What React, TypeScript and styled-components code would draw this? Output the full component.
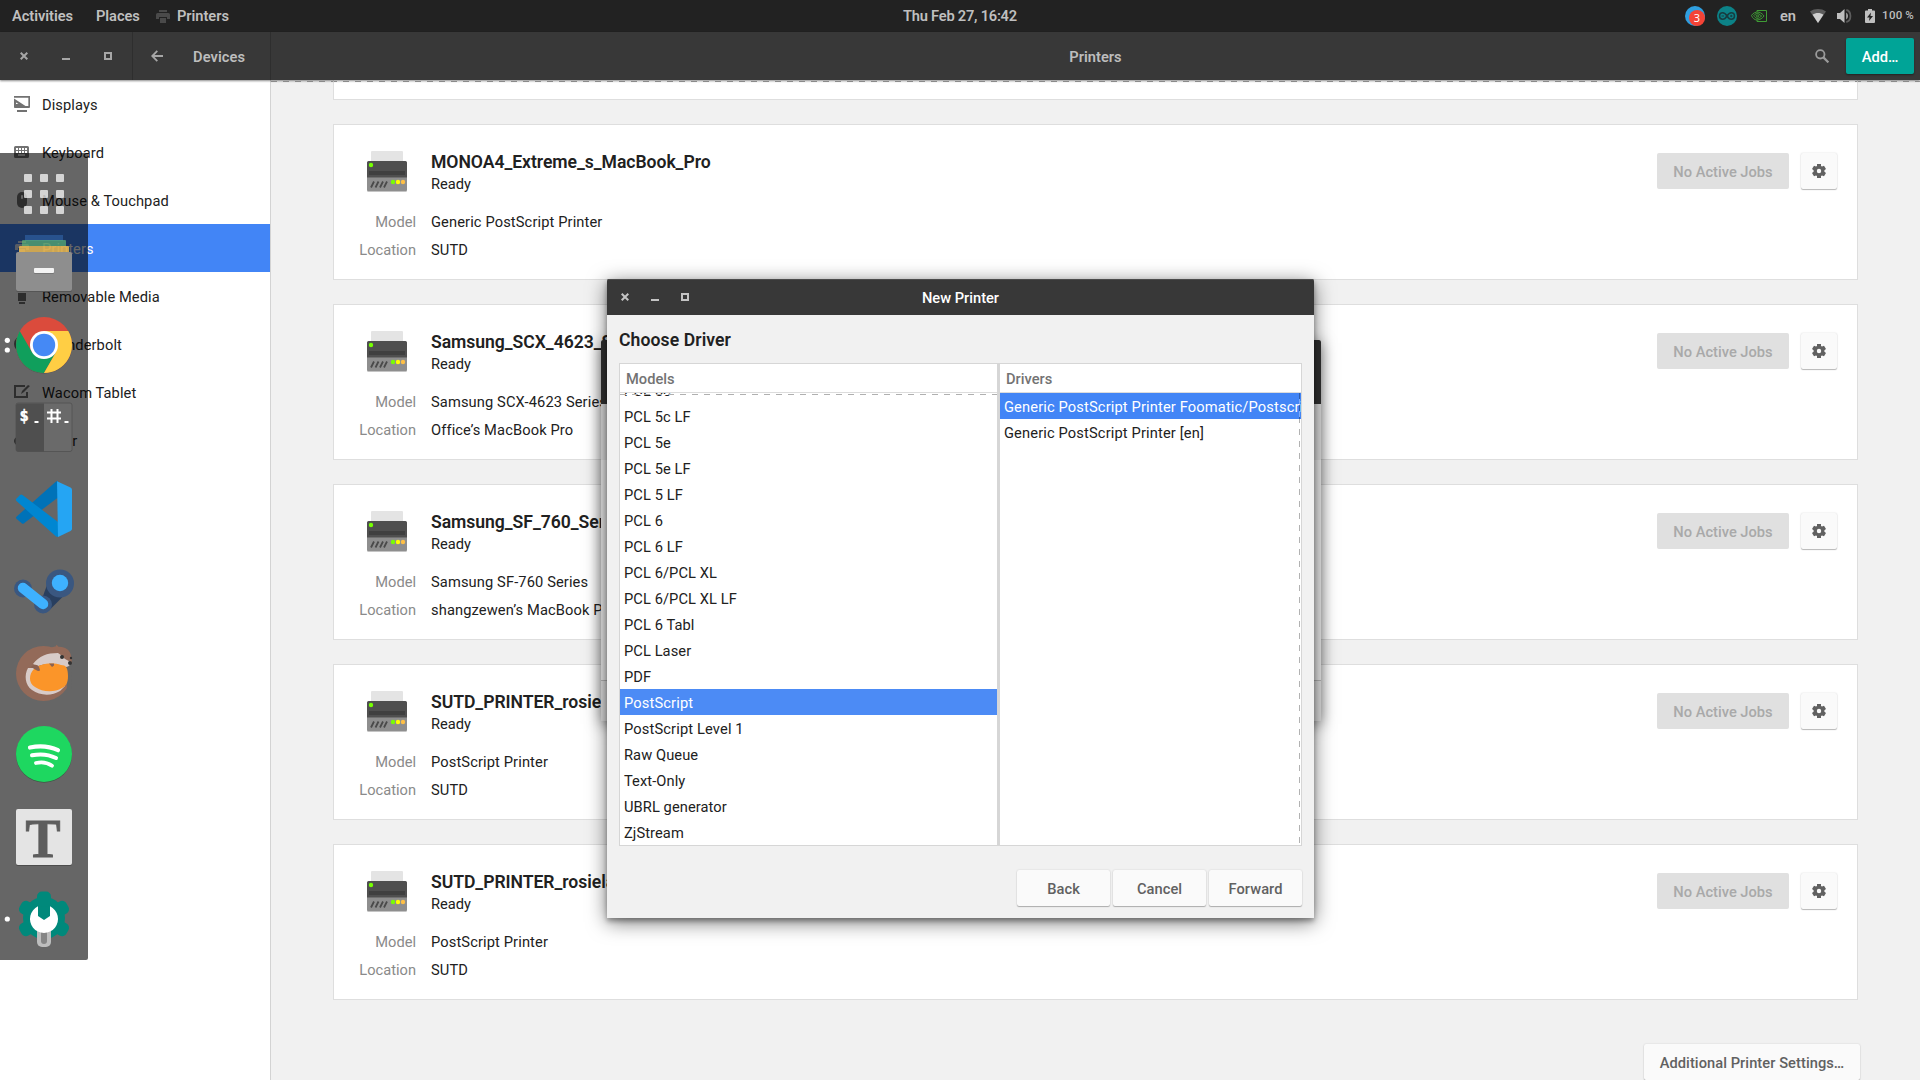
import React from 'react';
import styled, { createGlobalStyle, css } from 'styled-components';

const Global = createGlobalStyle`
  * { box-sizing: border-box; }
  html, body { margin: 0; padding: 0; }
  body {
    width: 1920px;
    height: 1080px;
    overflow: hidden;
    background: #f1f1f1;
    color: #212121;
    font-family: Roboto, "Noto Sans", sans-serif;
    font-size: 14.667px;
    line-height: 20px;
  }
  svg { display: block; flex: none; }
`;

const Desktop = styled.div`
  position: relative;
  width: 1920px;
  height: 1080px;
  overflow: hidden;
  display: flex;
  flex-direction: column;
`;

/* ---------- top panel ---------- */

const Panel = styled.header`
  height: 32px;
  flex: none;
  display: grid;
  grid-template-columns: 1fr auto 1fr;
  align-items: center;
  background: #222222;
  color: #bfbfbf;
  font-weight: 600;
`;

const PanelLeft = styled.nav`
  display: flex;
  align-items: center;
  padding-left: 12px;
`;

const PanelItem = styled.span<{ $width: number }>`
  width: ${(p) => p.$width}px;
  white-space: nowrap;
  letter-spacing: -0.05px;
`;

const Clock = styled.span`
  letter-spacing: -0.25px;
  white-space: nowrap;
`;

const PanelIcon = styled.span<{ $width: number }>`
  width: ${(p) => p.$width}px;
`;

const PanelRight = styled.div`
  display: flex;
  align-items: center;
  justify-content: flex-end;
  padding-right: 6px;
`;

const Percent = styled.span`
  width: 32px;
  font-size: 11.5px;
  font-weight: 500;
  white-space: nowrap;
  letter-spacing: 0.4px;
  word-spacing: -0.8px;
  line-height: 14px;
  margin: -2px 0 0 -1px;
`;

/* ---------- settings window ---------- */

const TitleBar = styled.div`
  height: 48px;
  flex: none;
  display: flex;
  background: #383838;
  color: #bdbdbd;
  font-weight: 600;
  position: relative;
  z-index: 1;
  box-shadow: 0 1px 2px rgba(0, 0, 0, 0.45);
`;

const TitleControls = styled.div`
  width: 133px;
  display: flex;
  align-items: center;
  padding-left: 20px;
  gap: 34px;
  border-right: 1px solid #2e2e2e;
  color: #a6a6a6;
`;

const TitleDevices = styled.div`
  width: 138px;
  display: flex;
  align-items: center;
  padding-left: 18px;
  gap: 30px;
  border-right: 1px solid #2e2e2e;
  letter-spacing: 0.08px;
`;

const TitleMain = styled.div`
  flex: 1;
  display: grid;
  grid-template-columns: 1fr auto 1fr;
  align-items: center;
`;

const TitleActions = styled.div`
  display: flex;
  justify-content: flex-end;
  align-items: center;
  gap: 17px;
  padding-right: 6px;
`;

const TitleText = styled.span`
  padding-top: 1px;
`;

const AddButton = styled.button`
  width: 68px;
  height: 36px;
  padding: 1px 0 0;
  border: 0;
  border-radius: 2px;
  background: #00a497;
  color: #fff;
  font: 500 14.667px/20px Roboto, sans-serif;
  box-shadow: 0 1px 2px rgba(0, 0, 0, 0.4);
`;

const WindowBody = styled.div`
  flex: 1;
  min-height: 0;
  display: flex;
`;

const Sidebar = styled.aside`
  width: 271px;
  flex: none;
  background: #fff;
  border-right: 1px solid #d3d3d3;
  letter-spacing: 0.09px;
`;

const SidebarRow = styled.div<{ $active?: boolean }>`
  height: 48px;
  display: flex;
  align-items: center;
  padding: 2px 0 0 14px;
  gap: 12px;
  background: ${(p) => (p.$active ? '#4285f6' : 'transparent')};
  color: ${(p) => (p.$active ? '#fff' : '#212121')};

  svg {
    margin-top: -2px;
    color: ${(p) => (p.$active ? 'rgba(255,255,255,.8)' : '#727272')};
  }
`;

const Content = styled.main`
  flex: 1;
  display: flex;
  flex-direction: column;
  align-items: flex-end;
  padding-right: 62px;
  overflow: hidden;
  background:
    repeating-linear-gradient(90deg, #a3a3a3 0 6px, transparent 6px 12px) 0 1px / 100% 1px no-repeat,
    #f1f1f1;
`;

const cardFrame = css`
  width: 1525px;
  flex: none;
  background: #fff;
  border: 1px solid #dedede;
`;

const ClippedCard = styled.section`
  ${cardFrame}
  height: 20px;
  border-top: 0;
  background:
    repeating-linear-gradient(90deg, #a3a3a3 0 6px, transparent 6px 12px) -3px 1px / 110% 1px no-repeat,
    #fff;
`;

const Card = styled.section`
  ${cardFrame}
  height: 156px;
  margin-top: 24px;
  display: flex;
  align-items: flex-start;
  justify-content: space-between;
`;

const CardInfo = styled.div`
  display: grid;
  grid-template-columns: 82px auto;
  column-gap: 15px;
  grid-template-rows: 57px 28px 28px;
  padding-top: 26px;
`;

const CardIcon = styled.div`
  display: flex;
  justify-content: flex-end;
  padding-right: 9px;
`;

const PrinterName = styled.h2`
  margin: 0;
  font-size: 17.6px;
  line-height: 22px;
  font-weight: 600;
  letter-spacing: -0.05px;
  white-space: nowrap;
`;

const Ready = styled.div`
  line-height: 22px;
`;

const Label = styled.div`
  text-align: right;
  color: #8a8a8a;
  line-height: 28px;
`;

const Value = styled.div`
  line-height: 28px;
  letter-spacing: 0.12px;
  white-space: nowrap;
`;

const CardActions = styled.div`
  display: flex;
  gap: 12px;
  padding: 28px 20px 0 0;
`;

const JobsButton = styled.button`
  width: 132px;
  height: 36px;
  padding: 2px 0 0;
  border: 0;
  border-radius: 2px;
  background: #e0e0e0;
  color: #a9a9a9;
  font: 500 14.667px/20px Roboto, sans-serif;
`;

const RaisedButton = styled.button<{ $width: number }>`
  width: ${(p) => p.$width}px;
  height: 36px;
  flex: none;
  display: flex;
  align-items: center;
  justify-content: center;
  padding: 2px 0 0;
  border: 0;
  border-radius: 2px;
  background: #fafafa;
  color: #616161;
  font: 500 14.667px/20px Roboto, sans-serif;
  letter-spacing: 0.06px;
  white-space: nowrap;
  box-shadow: 0 1px 1px rgba(0, 0, 0, 0.26), 0 0 2px rgba(0, 0, 0, 0.14);

  svg { margin-top: -2px; }
`;

const MoreSettings = styled.div`
  margin: 44px -2px 0 0;
`;

/* ---------- dialogs floating on the desktop ---------- */

const ParentShadow = styled.div`
  position: absolute;
  left: 601px;
  top: 340px;
  width: 720px;
  height: 381px;
  box-shadow: 0 3px 14px rgba(0, 0, 0, 0.5);
`;

const ParentDialog = styled.div`
  height: 381px;
  display: grid;
  grid-template-rows: 64px 56px 1fr 41px;
  border-radius: 2px 2px 0 0;
  overflow: hidden;
`;

const Band = styled.div<{ $fill: string; $line?: boolean }>`
  background: ${(p) => p.$fill};
  border-top: ${(p) => (p.$line ? '1px solid #b4b4b4' : '0')};
`;

const Dialog = styled.div`
  position: absolute;
  left: 607px;
  top: 279px;
  width: 707px;
  height: 639px;
  display: flex;
  flex-direction: column;
  background: #f1f1f1;
  border-radius: 2px 2px 0 0;
  box-shadow: 0 3px 5px rgba(0, 0, 0, 0.32), 0 4px 20px rgba(0, 0, 0, 0.55);
`;

const DialogTitle = styled.div`
  height: 36px;
  display: grid;
  grid-template-columns: 1fr auto 1fr;
  align-items: center;
  padding: 1px 14px 0;
  background: #383838;
  box-shadow: inset 0 1px 0 #4c4c4c;
  border-radius: 2px 2px 0 0;
  color: #fff;
  font-weight: 500;
`;

const DialogControls = styled.div`
  display: flex;
  align-items: center;
  gap: 22px;
  margin-top: -1px;
  color: #c4c4c4;
`;

const DialogBody = styled.div`
  flex: 1;
  display: flex;
  flex-direction: column;
  padding: 14px 12px 12px;
`;

const DialogHeading = styled.h1`
  margin: 0;
  height: 34px;
  font-size: 17.6px;
  line-height: 22px;
  font-weight: 600;
  letter-spacing: 0.08px;
`;

const Panes = styled.div`
  height: 483px;
  display: grid;
  grid-template-columns: 377px 301px;
  column-gap: 3px;
  border: 1px solid #d6d6d6;
  background: #d6d6d6;
`;

const Pane = styled.div`
  display: flex;
  flex-direction: column;
  min-width: 0;
  min-height: 0;
  background: #fff;
`;

const PaneHeader = styled.div`
  height: 29px;
  flex: none;
  padding: 1px 0 0 6px;
  line-height: 29px;
  border-bottom: 1px solid #dcdcdc;
  color: #737373;
  font-weight: 500;
`;

const PaneRows = styled.div<{ $end?: boolean }>`
  position: relative;
  flex: 1;
  min-height: 0;
  display: flex;
  flex-direction: column;
  justify-content: ${(p) => (p.$end ? 'flex-end' : 'flex-start')};
  overflow: hidden;

  &::after {
    content: '';
    position: absolute;
    ${(p) =>
      p.$end
        ? css`
            inset: 1px 0 auto 0;
            height: 1px;
            background: repeating-linear-gradient(90deg, #b0b0b0 0 6px, #fff 6px 12px);
          `
        : css`
            inset: 0 1px 0 auto;
            width: 1px;
            background: repeating-linear-gradient(180deg, rgba(0, 0, 0, 0.3) 0 6px, rgba(255, 255, 255, 0.3) 6px 12px);
          `}
  }
`;

const PaneRow = styled.div<{ $fill?: string; $spacing?: number }>`
  height: 26px;
  flex: none;
  padding: 1px 0 0 4px;
  line-height: 26px;
  letter-spacing: ${(p) => p.$spacing ?? 0.08}px;
  white-space: nowrap;
  overflow: hidden;
  background: ${(p) => p.$fill ?? 'transparent'};
  color: ${(p) => (p.$fill ? '#fff' : '#212121')};
`;

const DialogButtons = styled.div`
  margin-top: auto;
  display: flex;
  justify-content: flex-end;
  gap: 3px;
`;

/* ---------- dock ---------- */

const Dock = styled.div`
  position: absolute;
  left: 0;
  top: 153px;
  width: 88px;
  height: 807px;
  z-index: 2;
  display: flex;
  flex-direction: column;
  background: rgba(0, 0, 0, 0.6);
  border-radius: 0 0 2px 0;
`;

/* ---------- icons ---------- */

const CloseIcon = () => (
  <svg width="8" height="8" viewBox="0 0 8 8" stroke="currentColor" strokeWidth="2" fill="none">
    <path d="M.7.7l6.6 6.6M7.3.7L.7 7.3" />
  </svg>
);
const MinIcon = () => (
  <svg width="8" height="8" viewBox="0 0 8 8" fill="currentColor"><path d="M0 6h8v2H0z" /></svg>
);
const MaxIcon = () => (
  <svg width="8" height="8" viewBox="0 0 8 8" fill="none" stroke="currentColor" strokeWidth="2"><path d="M1 1h6v6H1z" /></svg>
);
const BackIcon = () => (
  <svg width="12" height="12" viewBox="0 0 12 12" fill="none" stroke="#a6a6a6" strokeWidth="1.8">
    <path d="M12 6H1.5M6.3.8L1.2 6l5.1 5.2" />
  </svg>
);
const SearchIcon = () => (
  <svg width="14" height="14" viewBox="0 0 14 14" fill="none" stroke="#9b9b9b" strokeWidth="1.8">
    <circle cx="5.3" cy="5.3" r="4.2" /><path d="M8.4 8.4l5 5" strokeWidth="2.2" />
  </svg>
);
const GearIcon = () => (
  <svg width="14" height="14" viewBox="0 0 14 14" fill="currentColor" fillRule="evenodd">
    <path d="M5 0h4v2l1 .6 2-.9 2 3.200L12.400 6.200v1.600L14 9.100l-2 3.200-2-.9-1 .6v2H5v-2l-1-.6-2 .9-2-3.200 1.600-1.300V6.200L0 4.900l2-3.200 2 .9L5 2zM7 4.800a2.200 2.200 0 100 4.400 2.200 2.200 0 000-4.400z" />
  </svg>
);
const SmallPrinter = ({ color = 'currentColor' }: { color?: string }) => (
  <svg width="14" height="13" viewBox="0 0 14 13" fill={color}>
    <path d="M3 0h8v2H3zM1.500 3h11A1.500 1.500 0 0114 4.500V9h-3V7H3v2H0V4.500A1.500 1.500 0 011.500 3zM4 8h6v5H4z" />
  </svg>
);

const DeviceIcon = ({ kind }: { kind: string }) => {
  const shapes: Record<string, React.ReactNode> = {
    displays: (
      <>
        <path d="M.8 2V1H15.200v10.200H.8V9.500" fill="none" stroke="currentColor" strokeWidth="1.700" transform="translate(0 -.2)" />
        <path d="M0 2.500L11.500 10H0zM2 6.500V8h2.500z" fillRule="evenodd" />
        <path d="M0 10h15v2H1zM3 14h10v2H3z" />
      </>
    ),
    keyboard: (
      <>
        <path d="M1.500 2h12A1.500 1.500 0 0115 3.500v9a1.500 1.500 0 01-1.500 1.500h-12A1.500 1.500 0 010 12.500v-9A1.500 1.500 0 011.500 2z" />
        <path d="M2 5h11M2 8h11" stroke="#fff" strokeWidth="2" strokeDasharray="2 1" />
        <path d="M4 11h7" stroke="#fff" strokeWidth="1.500" />
      </>
    ),
    mouse: (
      <>
        <rect x="3" y="0" width="10" height="16" rx="5" />
        <rect x="7" y="3" width="2" height="4" rx="1" fill="#fff" />
      </>
    ),
    printer: <path d="M4 1h8v2H4zM2.500 4h11A1.500 1.500 0 0115 5.500V10h-3V8H4v2H1V5.500A1.500 1.500 0 012.500 4zM5 9h6v5H5z" />,
    media: <path d="M5 0h6v4H5zM4 5h8v8H4zM5 14h6v2H5z" />,
    bolt: <path d="M8 0a8 8 0 100 16A8 8 0 008 0zm1 3L5 9h2.500L7 13l4-6H8.500z" />,
    tablet: (
      <>
        <path d="M11 2H1v11h12V8" fill="none" stroke="currentColor" strokeWidth="2" />
        <path d="M7 10l1-3 6-6 2 1-6 6z" />
      </>
    ),
    color: <path d="M8 4c5 0 8 2 8 5s-3 5-8 5-8-2-8-5 3-5 8-5z" />,
  };
  return <svg width="16" height="16" viewBox="0 0 16 16" fill="currentColor">{shapes[kind]}</svg>;
};

const PrinterPicture = () => (
  <svg width="40" height="41" viewBox="0 0 40 41">
    <path d="M5 0h30a1 1 0 011 1v10H4V1a1 1 0 011-1z" fill="#e4e4e4" />
    <path d="M0 28h40v11.500a1.500 1.500 0 01-1.500 1.500h-37A1.500 1.500 0 010 39.500z" fill="#c4c4c4" />
    <path d="M0 26h40v12.500a1.500 1.500 0 01-1.500 1.500h-37A1.500 1.500 0 010 38.500z" fill="#8e8e8e" />
    <path d="M1.500 10h37a1.500 1.500 0 011.500 1.500V27H0V11.500A1.500 1.500 0 011.500 10z" fill="#4f4f4f" />
    <path d="M0 26.500h40" stroke="#707070" />
    <path d="M2 20h36v4H2z" fill="#3f3f3f" />
    <circle cx="4" cy="14" r="2.200" fill="#76ff03" />
    <path d="M4 36l3-6M8.500 36l3-6M13 36l3-6M17 36l3-6" transform="translate(0 .5)" stroke="#4a4a4a" strokeWidth="1.800" />
    <circle cx="26" cy="31" r="2.200" fill="#76ff03" />
    <circle cx="31" cy="31" r="2.200" fill="#ffff00" />
    <circle cx="36" cy="31" r="2.200" fill="#ffc046" />
  </svg>
);

const TrayIcons = () => (
  <>
    <PanelIcon $width={32}>
      <svg width="20" height="20" viewBox="0 0 20 20">
        <circle cx="10" cy="10" r="10" fill="#2f9fe0" />
        <circle cx="12" cy="12" r="8" fill="#f44336" />
        <text x="12" y="16" fill="#fff" fontSize="11" fontWeight="400" textAnchor="middle" fontFamily="Noto Sans">3</text>
      </svg>
    </PanelIcon>
    <PanelIcon $width={34}>
      <svg width="20" height="20" viewBox="0 0 20 20" fill="none">
        <circle cx="10" cy="10" r="10" fill="#0c8287" />
        <path d="M10 10C8.500 7.500 7.300 6.800 5.700 6.800a3.200 3.200 0 000 6.400c1.600 0 2.800-.7 4.300-3.200 1.500-2.500 2.700-3.200 4.300-3.200a3.200 3.200 0 010 6.400c-1.600 0-2.800-.7-4.300-3.200z" stroke="#173c40" strokeWidth="1.500" />
        <path d="M4.500 10h2.500M13 10h2.500M14.250 8.800v2.400" stroke="#173c40" />
      </svg>
    </PanelIcon>
    <PanelIcon $width={29}>
      <svg width="16" height="12" viewBox="0 0 16 12" fill="none" stroke="#3f9c35" strokeWidth="1">
        <path d="M6 2V.5h9.500v11H6V10" />
        <path d="M.5 5.500C2 3 5 1.500 8 2.200c2.500.8 4 2.300 5 3.800-1.500 2.200-4 4-7 4C3.500 10 1.500 8 .5 5.500z" />
        <path d="M2.800 5.500C4 3.800 6 3 8 4c1.200.6 1.800 1.200 2.500 2C9.500 7.500 7.500 8.500 6 8.300 4.500 8 3.500 7 2.800 5.500z" />
        <path d="M5 5.700c1-1 2.500-.8 3.200.3C7 7.300 5.500 7 5 5.700z" />
      </svg>
    </PanelIcon>
  </>
);

const StatusIcons = () => (
  <>
    <PanelIcon $width={27}>
      <svg width="16" height="14" viewBox="0 0 16 14">
        <path d="M0 2.500C4.500-.8 11.500-.8 16 2.500L8 14z" fill="#5d5d5d" />
        <path d="M2.600 5.800C5.500 3.300 10.500 3.300 13.400 5.800L8 14z" fill="#cfcfcf" />
      </svg>
    </PanelIcon>
    <PanelIcon $width={28}>
      <svg width="16" height="14" viewBox="0 0 16 14">
        <path d="M0 4h3l4.500-4v14L3 10H0z" fill="#bfbfbf" />
        <path d="M9.300 3.500c2 1.500 2 5.500 0 7z" fill="#bfbfbf" />
        <path d="M9.300 1c5.500 1.200 5.500 10.800 0 12" fill="none" stroke="#5d5d5d" strokeWidth="1.800" />
      </svg>
    </PanelIcon>
    <PanelIcon $width={18}>
      <svg width="10" height="14" viewBox="0 0 10 14">
        <path d="M3 0h4v1.500h2a1 1 0 011 1V13a1 1 0 01-1 1H1a1 1 0 01-1-1V2.500a1 1 0 011-1h2z" fill="#bfbfbf" />
        <path d="M6 3.500L2 8.500h2.500L4 12l4-5H5.500z" fill="#222" />
      </svg>
    </PanelIcon>
  </>
);

/* Dock slots are drawn in desktop coordinates, 82px apart. */
const Slot = ({ top, height = 82, children }: { top: number; height?: number; children: React.ReactNode }) => (
  <svg width="88" height={height} viewBox={`0 ${top} 88 ${height}`}>{children}</svg>
);

const DockIcons = () => (
  <>
    <Slot top={153} height={69}>
      {[174, 190, 206].map((y) =>
        [24, 40, 56].map((x) => <rect key={`${x}-${y}`} x={x} y={y} width="8" height="8" rx="1" fill="#fff" opacity=".72" />),
      )}
    </Slot>
    <Slot top={222}>
      <rect x="25" y="235" width="38" height="6" fill="#2f5f9f" opacity=".7" />
      <path d="M23 240h42a1 1 0 011 1v5H22v-5a1 1 0 011-1z" fill="#5fb878" opacity=".68" />
      <path d="M20 246h48a1 1 0 011 1v5H19v-5a1 1 0 011-1z" fill="#ffc54e" opacity=".78" />
      <rect x="16" y="253" width="56" height="39" rx="2" fill="#555" />
      <rect x="16" y="252" width="56" height="39" rx="2" fill="#8e8e8e" />
      <rect x="34" y="269" width="20" height="5" rx="1" fill="#777" />
      <rect x="34" y="268" width="20" height="5" rx="1" fill="#f3f3f3" />
    </Slot>
    <Slot top={304}>
      <circle cx="7.300" cy="340.300" r="2.600" fill="#fff" />
      <circle cx="7.300" cy="350" r="2.600" fill="#fff" />
      <circle cx="44" cy="345.700" r="28" fill="#444" opacity=".4" />
      <circle cx="44" cy="345" r="28" fill="#db4b3c" />
      <path d="M19.750 331A28 28 0 0044 373L56.100 352 44 345 31.900 352z" fill="#109f5c" />
      <path d="M44 331h24.250A28 28 0 0144 373l12.100-21z" fill="#ffce44" />
      <circle cx="44" cy="345" r="14" fill="#fff" />
      <circle cx="44" cy="345" r="11.200" fill="#4589f5" />
    </Slot>
    <Slot top={386}>
      <rect x="16" y="403" width="56" height="48.500" rx="2" fill="#6a6a6a" stroke="#505050" strokeWidth=".8" />
      <path d="M18 403.500h26v48H18a2 2 0 01-2-2v-44a2 2 0 012-2z" fill="#4f4f4f" />
      <text x="19.500" y="421" fill="#fff" stroke="#fff" strokeWidth=".4" fontSize="15.500" fontWeight="700" fontFamily="DejaVu Sans Mono">$</text>
      <path d="M34.500 421h4v2h-4zM64.500 421h4v2h-4z" fill="#fff" />
      <path d="M51.500 409v14M57.500 409v14M47 412.500h14M47 418.500h14" stroke="#fff" strokeWidth="2" />
    </Slot>
    <Slot top={468}>
      <path d="M58 481v16.500L25 522.500q-1.500 2-3 1l-5.300-4.500q-1.500-1.200 0-2.500L56 481.500z" fill="#0072b8" />
      <path d="M22.500 495q-1.200-1-2.500 0l-3.500 3.500q-1.200 1.200 0 2.500L56 536.500l2 .5v-15z" fill="#0086d1" />
      <path d="M57 481.200L70.500 487.500q1.500.8 1.500 2v39.500q0 1.200-1.500 2L58 537z" fill="#25a5f3" />
    </Slot>
    <Slot top={550}>
      <path d="M52.500 594h13L50 609.500l-10-12z" fill="#293f5f" />
      <path d="M47 585l13 12-10 9-7-10z" fill="#293f5f" />
      <circle cx="60" cy="583.500" r="14" fill="#3a5780" />
      <circle cx="23" cy="588.500" r="9" fill="#3a5780" />
      <circle cx="43" cy="604.500" r="9" fill="#3a5780" />
      <path d="M23 588l20 16" stroke="#3eb1ff" strokeWidth="10.500" strokeLinecap="round" />
      <circle cx="60" cy="583" r="8.200" fill="#3eb1ff" />
    </Slot>
    <Slot top={632}>
      <circle cx="43.500" cy="673.500" r="27.500" fill="#936a59" />
      <path d="M66 663l6 3-1 23h-4z" fill="#666" />
      <path d="M46 650c5-3 8-3 9.500-3.500l1-1.800 2 2c7-.3 11.500 3.300 12.500 9l1 7-4 3-18-5z" fill="#936a59" />
      <path d="M33 664c6-8 14-11 25-11 3 1.500 5 6 13 9-1 4-3 5-6 5-8-.5-14-5-27-1z" fill="#d8cbc8" />
      <path d="M28 668c-4 7-3 17 4 22 8 6 20 6 28 1l5-5-30-18z" fill="#d8cbc8" />
      <path d="M34 669c5-5 18-7 27-4 5 0 7 3 7 11 0 7-2 10-6 12-8 5-20 4-27-1-7-4-6-13-1-18z" fill="#fb9529" />
      <path d="M31 667c3-3 6-3 8 0l1 3c0 1-2 1.500-4 0zM49 663.500h5v2l-2 1.500z" fill="#8a6253" />
      <circle cx="62" cy="657" r="2" fill="#333" />
      <circle cx="70" cy="663" r="2" fill="#333" />
      <circle cx="71" cy="658" r="1.200" fill="#333" />
    </Slot>
    <Slot top={714}>
      <circle cx="44" cy="754.700" r="28" fill="#3d5a46" />
      <circle cx="44" cy="754" r="28" fill="#1ed760" />
      <g fill="none" stroke="#fff" strokeLinecap="round">
        <path d="M30 747.500c10-2 20-1 28 2.700" strokeWidth="4.200" />
        <path d="M32 755.300c9-1.800 17-.8 24 2.700" strokeWidth="4" />
        <path d="M36 763c6-1.500 11-.8 16 2.700" strokeWidth="3.800" />
      </g>
    </Slot>
    <Slot top={796}>
      <rect x="16" y="810" width="56" height="56" rx="2" fill="#4d4d4d" />
      <rect x="16" y="809" width="56" height="56" rx="2" fill="#e4e4e4" />
      <text x="43" y="857" textAnchor="middle" fill="#5d5d5d" stroke="#5d5d5d" strokeWidth="1" fontSize="55" fontFamily="Liberation Serif" fontWeight="700" textLength="35" lengthAdjust="spacingAndGlyphs">T</text>
    </Slot>
    <Slot top={878}>
      <circle cx="7.300" cy="919" r="2.600" fill="#fff" />
      <circle cx="44" cy="918" r="21" fill="#00897b" />
      {[0, 60, 120, 180, 240, 300].map((a) => (
        <rect key={a} x="37" y="891.500" width="14" height="15" rx="5" fill="#00897b" transform={`rotate(${a} 44 918.500)`} />
      ))}
      <path d="M37 930h14v12a5 5 0 01-5 5h-4a5 5 0 01-5-5z" fill="#bdbdbd" />
      <path d="M41 930h6v11a3 3 0 01-6 0z" fill="#858585" />
      <path d="M38 906.300a14 14 0 1012 0V916l-6 4-6-4z" fill="#fff" />
    </Slot>
  </>
);

/* ---------- data ---------- */

const devices = [
  { kind: 'displays', label: 'Displays' },
  { kind: 'keyboard', label: 'Keyboard' },
  { kind: 'mouse', label: 'Mouse & Touchpad' },
  { kind: 'printer', label: 'Printers', active: true },
  { kind: 'media', label: 'Removable Media' },
  { kind: 'bolt', label: 'Thunderbolt' },
  { kind: 'tablet', label: 'Wacom Tablet' },
  { kind: 'color', label: 'Color' },
];

const printers = [
  { name: 'MONOA4_Extreme_s_MacBook_Pro', model: 'Generic PostScript Printer', location: 'SUTD' },
  { name: 'Samsung_SCX_4623_Series', model: 'Samsung SCX-4623 Series', location: 'Office’s MacBook Pro' },
  { name: 'Samsung_SF_760_Series', model: 'Samsung SF-760 Series', location: 'shangzewen’s MacBook Pro' },
  { name: 'SUTD_PRINTER_rosielab', model: 'PostScript Printer', location: 'SUTD' },
  { name: 'SUTD_PRINTER_rosielab', model: 'PostScript Printer', location: 'SUTD' },
];

const models = [
  'PCL 5c', 'PCL 5c LF', 'PCL 5e', 'PCL 5e LF', 'PCL 5 LF', 'PCL 6', 'PCL 6 LF', 'PCL 6/PCL XL',
  'PCL 6/PCL XL LF', 'PCL 6 Tabl', 'PCL Laser', 'PDF', 'PostScript', 'PostScript Level 1',
  'Raw Queue', 'Text-Only', 'UBRL generator', 'ZjStream',
];

export default function App() {
  return (
    <>
      <Global />
      <Desktop>
        <Panel>
          <PanelLeft>
            <PanelItem $width={84}>Activities</PanelItem>
            <PanelItem $width={60}>Places</PanelItem>
            <PanelIcon $width={21}><SmallPrinter color="#4a4a4a" /></PanelIcon>
            <PanelItem $width={60}>Printers</PanelItem>
          </PanelLeft>
          <Clock>Thu Feb 27, 16:42</Clock>
          <PanelRight>
            <TrayIcons />
            <PanelItem $width={30}>en</PanelItem>
            <StatusIcons />
            <Percent>100 %</Percent>
          </PanelRight>
        </Panel>

        <TitleBar>
          <TitleControls><CloseIcon /><MinIcon /><MaxIcon /></TitleControls>
          <TitleDevices><BackIcon /><TitleText>Devices</TitleText></TitleDevices>
          <TitleMain>
            <span />
            <TitleText>Printers</TitleText>
            <TitleActions><SearchIcon /><AddButton>Add…</AddButton></TitleActions>
          </TitleMain>
        </TitleBar>

        <WindowBody>
          <Sidebar>
            {devices.map((d) => (
              <SidebarRow key={d.label} $active={d.active}>
                <DeviceIcon kind={d.kind} />
                <span>{d.label}</span>
              </SidebarRow>
            ))}
          </Sidebar>
          <Content>
            <ClippedCard />
            {printers.map((p, i) => (
              <Card key={i}>
                <CardInfo>
                  <CardIcon><PrinterPicture /></CardIcon>
                  <div>
                    <PrinterName>{p.name}</PrinterName>
                    <Ready>Ready</Ready>
                  </div>
                  <Label>Model</Label>
                  <Value>{p.model}</Value>
                  <Label>Location</Label>
                  <Value>{p.location}</Value>
                </CardInfo>
                <CardActions>
                  <JobsButton>No Active Jobs</JobsButton>
                  <RaisedButton $width={36}><GearIcon /></RaisedButton>
                </CardActions>
              </Card>
            ))}
            <MoreSettings><RaisedButton $width={216}>Additional Printer Settings…</RaisedButton></MoreSettings>
          </Content>
        </WindowBody>

        <ParentShadow>
          <ParentDialog>
            <Band $fill="#323232" />
            <Band $fill="#dcdcdc" />
            <Band $fill="#e8e8e8" />
            <Band $fill="#dedede" $line />
          </ParentDialog>
        </ParentShadow>

        <Dialog>
          <DialogTitle>
            <DialogControls><CloseIcon /><MinIcon /><MaxIcon /></DialogControls>
            <span>New Printer</span>
          </DialogTitle>
          <DialogBody>
            <DialogHeading>Choose Driver</DialogHeading>
            <Panes>
              <Pane>
                <PaneHeader>Models</PaneHeader>
                <PaneRows $end>
                  {models.map((m) => (
                    <PaneRow
                      key={m}
                      $fill={m === 'PostScript' ? '#4c8bf5' : undefined}
                      $spacing={m.startsWith('PostScript') ? 0.14 : undefined}
                    >
                      {m}
                    </PaneRow>
                  ))}
                </PaneRows>
              </Pane>
              <Pane>
                <PaneHeader>Drivers</PaneHeader>
                <PaneRows>
                  <PaneRow $fill="#4285f6" $spacing={0.14}>Generic PostScript Printer Foomatic/Postscript</PaneRow>
                  <PaneRow $spacing={0.14}>Generic PostScript Printer [en]</PaneRow>
                </PaneRows>
              </Pane>
            </Panes>
            <DialogButtons>
              <RaisedButton $width={93}>Back</RaisedButton>
              <RaisedButton $width={93}>Cancel</RaisedButton>
              <RaisedButton $width={93}>Forward</RaisedButton>
            </DialogButtons>
          </DialogBody>
        </Dialog>

        <Dock><DockIcons /></Dock>
      </Desktop>
    </>
  );
}
